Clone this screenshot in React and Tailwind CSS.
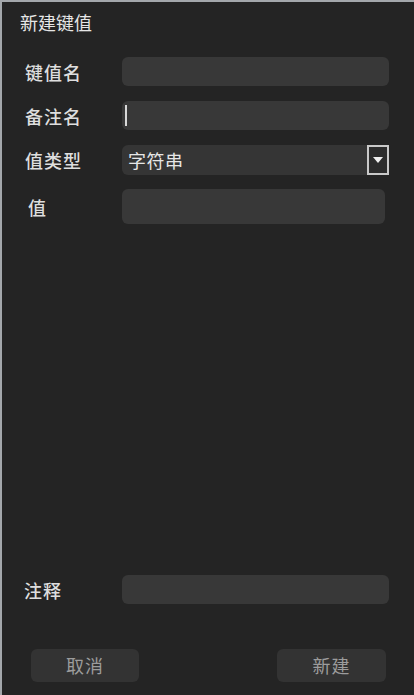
const font = { fontFamily: '"Noto Sans CJK SC", "Noto Sans", sans-serif' };

const Field = ({ label, className = '', children }) => (
  <div className={`flex items-center pl-[23px] pr-[25px] ${className}`}>
    <div className="w-[97px] shrink-0 text-[18px] font-medium tracking-[1px] text-[#dedede] leading-none">{label}</div>
    {children}
  </div>
);

const Box = ({ className = '', children }) => (
  <div className={`flex-1 rounded-[6px] bg-[#383838] flex items-center ${className}`}>{children}</div>
);

export default function App() {
  return (
    <div
      className="w-[414px] h-[695px] bg-[#242424] border-t-2 border-l-2 border-[#a3a7ab] flex flex-col overflow-hidden"
      style={font}
    >
      <div className="mt-[9px] pl-[18px] h-[22px] text-[18px] leading-[22px] text-[#e6e6e6]">新建键值</div>

      <Field label="键值名" className="mt-[24px]">
        <Box className="h-[29px]" />
      </Field>

      <Field label="备注名" className="mt-[15px]">
        <Box className="h-[29px] pl-[3px]">
          <div className="w-[2px] h-[21px] bg-[#d8d8d8]" />
        </Box>
      </Field>

      <Field label="值类型" className="mt-[15px]">
        <div className="flex-1 h-[30px] rounded-[6px] bg-[#353535] flex items-center justify-between pl-[6px]">
          <span className="text-[18px] tracking-[0.5px] text-[#e6e6e6] leading-none">字符串</span>
          <div className="w-[22px] h-[30px] border-2 border-[#c9c9c9] bg-[#2c2c2c] flex items-center justify-center">
            <svg width="10" height="6" viewBox="0 0 10 6">
              <path d="M0 0 H10 L5 6 Z" fill="#f0f0f0" />
            </svg>
          </div>
        </div>
      </Field>

      <Field label="值" className="mt-[14px] !pr-[29px] !pl-[26px] [&>div:first-child]:w-[94px]">
        <Box className="h-[35px]" />
      </Field>

      <div className="flex-1" />

      <Field label="注释" className="!pl-[22px] [&>div:first-child]:w-[98px]">
        <Box className="h-[29px]" />
      </Field>

      <div className="mt-[45px] mb-[13px] flex justify-between pl-[29px] pr-[28px]">
        <button className="w-[108px] h-[33px] rounded-[6px] bg-[#333333] text-[18px] tracking-[1px] text-[#9c9c9c]">取消</button>
        <button className="w-[109px] h-[33px] rounded-[6px] bg-[#333333] text-[18px] tracking-[1px] text-[#9c9c9c]">新建</button>
      </div>
    </div>
  );
}
